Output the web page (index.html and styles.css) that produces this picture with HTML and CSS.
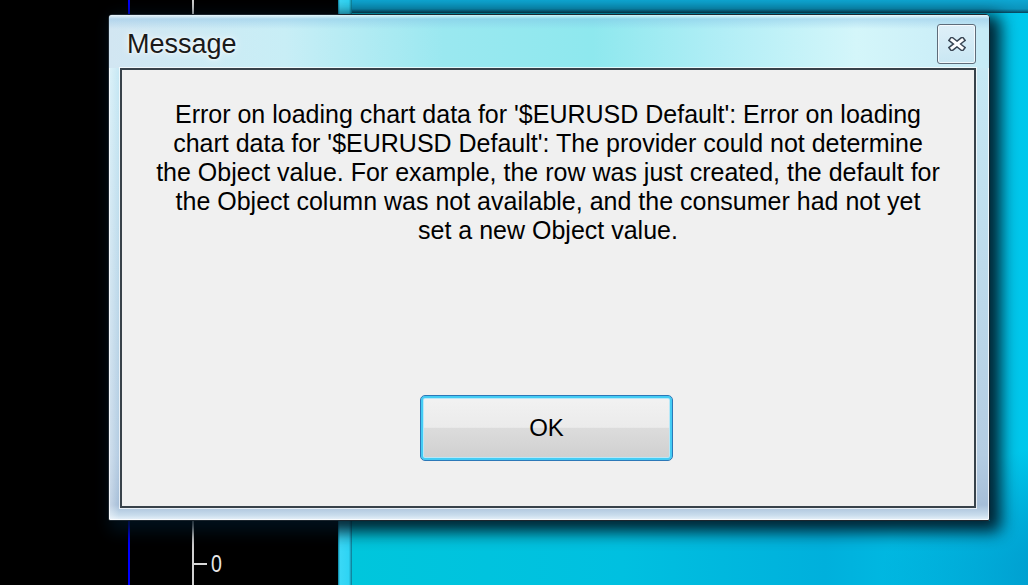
FILE: index.html
```html
<!DOCTYPE html>
<html lang="en">
<head>
    <meta charset="UTF-8">
    <meta name="viewport" content="width=device-width, initial-scale=1.0">
    <title>Message</title>
    <link rel="stylesheet" href="styles.css">
</head>
<body>

    <div class="screen">
        <div class="chart">
            <div class="plot"></div>
            <div class="gap"></div>
            <div class="scale">
                <div class="scale-row">
                    <span class="tick"></span>
                    <span class="scale-label">0</span>
                </div>
            </div>
        </div>
        <div class="edge"></div>
        <div class="desktop">
            <div class="desktop-band"></div>
        </div>
    </div>

    <div class="dialog">
        <div class="titlebar">
            <span class="title">Message</span>
            <button class="close" type="button" aria-label="Close">
                <svg width="18" height="14" viewBox="0 0 18 14">
                    <path d="M4 3 L14 11 M14 3 L4 11" stroke="#3a4654" stroke-width="6" stroke-linecap="square"/>
                    <path d="M4 3 L14 11 M14 3 L4 11" stroke="#ffffff" stroke-width="3" stroke-linecap="square"/>
                </svg>
            </button>
        </div>
        <div class="client">
            <p class="message">
                Error on loading chart data for '$EURUSD Default': Error on loading<br>
                chart data for '$EURUSD Default': The provider could not determine<br>
                the Object value. For example, the row was just created, the default for<br>
                the Object column was not available, and the consumer had not yet<br>
                set a new Object value.
            </p>
            <button class="ok" type="button">OK</button>
        </div>
    </div>

</body>
</html>
```

FILE: styles.css
```css
html, body {
    margin: 0;
    width: 1028px;
    height: 585px;
    overflow: hidden;
    font-family: "Liberation Sans", Arial, sans-serif;
}
.screen {
    display: flex;
    height: 585px;
}
.chart {
    width: 338px;
    display: flex;
    background: #000;
}
.plot {
    width: 128px;
    border-right: 2px solid #0000ff;
}
.gap {
    width: 62px;
    border-right: 2px solid #d0d0d0;
}
.scale {
    flex: 1;
    display: flex;
    flex-direction: column;
    justify-content: flex-end;
}
.scale-row {
    display: flex;
    align-items: center;
    height: 24px;
    margin-bottom: 9px;
}
.tick {
    width: 13px;
    height: 2px;
    background: #d8d8d8;
}
.scale-label {
    color: #e8e8e8;
    font-size: 23px;
    margin-left: 3px;
    transform: scaleX(0.85);
}
.edge {
    width: 14px;
    background: linear-gradient(to right, #0a7a98 0, #3ad8f6 2px, #2ed4f4 11px, #087890 14px);
}
.desktop {
    flex: 1;
    display: flex;
    flex-direction: column;
    background:
        radial-gradient(ellipse 260px 140px at 790px 575px, #0082bc 0%, rgba(0, 136, 192, 0) 100%),
        linear-gradient(to right, #00c6dc 0%, #00c0e0 40%, #00b0dc 70%, #00c8ec 100%);
}
.desktop-band {
    height: 13px;
    background: linear-gradient(to bottom, #0ea6d2 0, #0b94bc 9px, #07455a 13px);
}

/* dialog window */
.dialog {
    position: absolute;
    left: 108px;
    top: 14px;
    width: 882px;
    height: 507px;
    box-sizing: border-box;
    display: flex;
    flex-direction: column;
    padding: 0 13px 12px 11px;
    border: 1px solid #1c262e;
    border-radius: 4px 4px 2px 2px;
    background:
        linear-gradient(to right, rgba(255,255,255,0.4) 0, rgba(150,176,204,0.0) 10px),
        linear-gradient(to bottom, #d8ecf6 0, #c6e8f4 60px, #b4cce2 440px, #a6bed8 490px, #c8dcec 500px, #eef6fc 506px);
    box-shadow:
        inset 0 0 0 1px rgba(255, 255, 255, 0.75),
        6px 6px 16px 5px rgba(0, 18, 30, 0.9);
}
.titlebar {
    height: 53px;
    box-sizing: border-box;
    display: flex;
    justify-content: space-between;
    align-items: flex-start;
    padding: 9px 13px 0 18px;
    margin: 0 -13px 0 -11px;
    background:
        linear-gradient(to bottom, rgba(255,255,255,0.5) 0, rgba(120,180,225,0.35) 4px, rgba(255,255,255,0) 14px),
        linear-gradient(to right, #d2e6f2 0%, #c8eef6 20%, #9ae8f0 38%, #8ee8ee 55%, #b2eef6 70%, #d4f6fa 85%, #c6eaf6 100%);
    border-radius: 3px 3px 0 0;
}
.title {
    font-size: 27px;
    line-height: 40px;
    color: #1a1a1a;
    text-shadow: 0 0 8px rgba(255, 255, 255, 0.95), 0 0 3px #fff;
}
.close {
    width: 39px;
    height: 40px;
    display: flex;
    align-items: center;
    justify-content: center;
    padding: 0;
    border: 1px solid #5e6c7a;
    border-radius: 3px;
    background: linear-gradient(to bottom, rgba(228,240,248,0.8), rgba(200,226,240,0.6));
    box-shadow: inset 0 0 0 1px rgba(255, 255, 255, 0.7);
}
.client {
    flex: 1;
    display: flex;
    flex-direction: column;
    align-items: center;
    background: #f0f0f0;
    border: 2px solid #38424a;
    box-shadow: 0 0 0 1px rgba(255, 255, 255, 0.7);
}
.message {
    margin: 30px 0 0;
    font-size: 25px;
    line-height: 29px;
    text-align: center;
    white-space: nowrap;
    color: #000;
}
.ok {
    margin-top: auto;
    margin-bottom: 45px;
    margin-right: 3px;
    width: 253px;
    height: 66px;
    font-family: "Liberation Sans", Arial, sans-serif;
    font-size: 24px;
    color: #000;
    border: 1px solid #2c78b8;
    border-radius: 5px;
    background: linear-gradient(to bottom, #f2f2f2 0, #ebebeb 49%, #dcdcdc 50%, #cfcfcf 100%);
    box-shadow: inset 0 0 0 2px #44ccf4, inset 0 0 0 3px #b8e8f8;
}
```
